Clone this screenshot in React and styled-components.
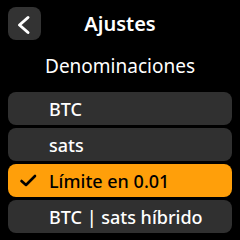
import styled, { createGlobalStyle } from 'styled-components';

const GlobalStyle = createGlobalStyle`
  html, body {
    margin: 0;
    padding: 0;
    background: #000;
  }
  body {
    font-family: "Noto Sans", "DejaVu Sans", sans-serif;
    color: #fff;
  }
`;

const Screen = styled.div`
  width: 240px;
  height: 240px;
  background: #000;
  display: flex;
  flex-direction: column;
  padding: 7px 8px 0;
  box-sizing: border-box;
`;

const Header = styled.div`
  display: grid;
  grid-template-columns: 33px 1fr 33px;
  align-items: center;
  height: 33px;
`;

const BackButton = styled.div`
  width: 33px;
  height: 33px;
  border-radius: 8px;
  background: #333333;
  display: flex;
  align-items: center;
  justify-content: center;
`;

const Title = styled.div`
  text-align: center;
  font-size: 20px;
  font-weight: 600;
  line-height: 33px;
`;

const SubTitle = styled.div`
  text-align: center;
  font-size: 19px;
  line-height: 26px;
  margin-top: 13px;
`;

const List = styled.div`
  display: flex;
  flex-direction: column;
  gap: 3px;
  margin-top: 13px;
`;

const Row = styled.div`
  height: 33px;
  border-radius: 8px;
  background: ${(p) => (p.$active ? '#ff9f0a' : '#303030')};
  color: ${(p) => (p.$active ? '#000' : '#fff')};
  display: flex;
  align-items: center;
  font-size: 18px;
  font-weight: 500;
  position: relative;
  padding-left: 41px;
`;

const Check = styled.svg`
  position: absolute;
  left: 11px;
  top: 8px;
`;

const options = [
  { label: 'BTC' },
  { label: 'sats' },
  { label: 'Límite en 0.01', active: true },
  { label: 'BTC | sats híbrido' },
];

export default function App() {
  return (
    <>
      <GlobalStyle />
      <Screen>
        <Header>
          <BackButton>
            <svg width="33" height="33" viewBox="0 0 33 33">
              <path d="M20 10.5 L11.5 18 L20 25.5" fill="none" stroke="#fff" strokeWidth="3" strokeLinecap="round" strokeLinejoin="round" />
            </svg>
          </BackButton>
          <Title>Ajustes</Title>
          <div />
        </Header>
        <SubTitle>Denominaciones</SubTitle>
        <List>
          {options.map((o) => (
            <Row key={o.label} $active={o.active}>
              {o.active && (
                <Check width="18" height="16" viewBox="0 0 18 16">
                  <path d="M2.5 9 L7 13 L16 4" fill="none" stroke="#000" strokeWidth="2.6" strokeLinecap="round" strokeLinejoin="round" />
                </Check>
              )}
              {o.label}
            </Row>
          ))}
        </List>
      </Screen>
    </>
  );
}
